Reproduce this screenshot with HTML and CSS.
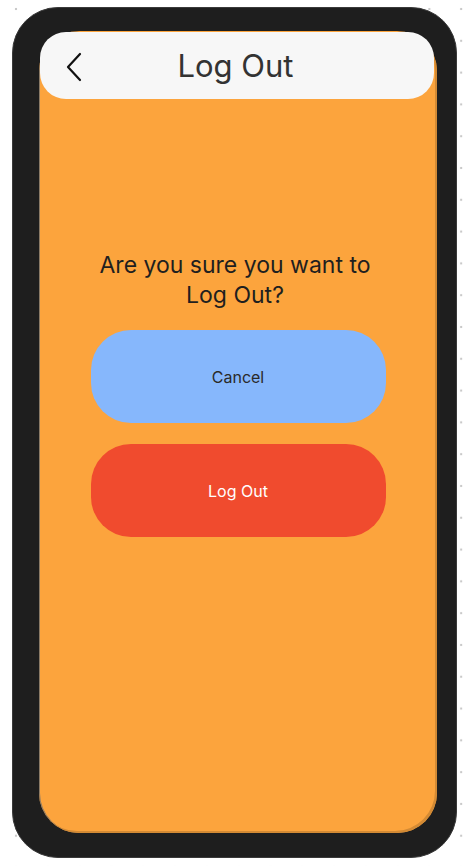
FILE: index.html
```html
<!DOCTYPE html>
<html lang="en">
<head>
<meta charset="utf-8">
<title>Log Out</title>
<link rel="stylesheet" href="styles.css">
</head>
<body>
  <div class="phone">
    <div class="screen">
      <header class="topbar">
        <button class="back" aria-label="Back">
          <svg width="18" height="30" viewBox="0 0 18 30" fill="none">
            <path d="M15 2 L3 15 L15 28" stroke="#111" stroke-width="2.2" stroke-linecap="round" stroke-linejoin="round"/>
          </svg>
        </button>
        <h1 class="title">Log Out</h1>
      </header>
      <main class="content">
        <p class="question">Are you sure you want to<br>Log Out?</p>
        <button class="btn btn-cancel">Cancel</button>
        <button class="btn btn-logout">Log Out</button>
      </main>
    </div>
  </div>
</body>
</html>
```

FILE: styles.css
```css
* { box-sizing: border-box; }

html, body {
  margin: 0;
  padding: 0;
}

body {
  width: 470px;
  height: 866px;
  overflow: hidden;
  background-color: #ffffff;
  background-image: radial-gradient(circle, #c9c9c9 1px, transparent 1.6px);
  background-size: 31.8px 31.8px;
  background-position: 0.1px -6.9px;
  font-family: Inter, "Noto Sans", sans-serif;
}

.phone {
  margin: 7px 0 0 12px;
  width: 445px;
  height: 851px;
  border-radius: 46px;
  background: #1e1e1e;
  border: 1px solid #3a3a3a;
  padding: 23px 19px 23px 26px;
}

.screen {
  position: relative;
  width: 398px;
  height: 802px;
  border-radius: 40px;
  background: #fca43d;
  box-shadow: inset -2px -2px 0 #d38a34, inset 1px 0 0 #8a7a66;
  display: flex;
  flex-direction: column;
}

.topbar {
  margin: 1px 0 0 1px;
  width: 394px;
  height: 67px;
  border-radius: 26px;
  background: #f7f7f7;
  display: flex;
  align-items: center;
  justify-content: center;
  position: relative;
}

.back {
  position: absolute;
  left: 25px;
  top: 20px;
  border: 0;
  padding: 0;
  background: none;
  width: 18px;
  height: 30px;
  display: block;
}
.back svg { display: block; }

.title {
  margin: 0 0 0 -3px;
  font-size: 31px;
  font-weight: 400;
  color: #333333;
  letter-spacing: 0;
  line-height: 1;
}

.content {
  display: flex;
  flex-direction: column;
  align-items: center;
  padding-top: 151px;
}

.question {
  margin: 0 0 20px;
  padding-right: 6px;
  font-size: 23px;
  line-height: 30px;
  text-align: center;
  color: #1f1f1f;
  font-weight: 400;
}

.btn {
  width: 295px;
  height: 93px;
  border: 0;
  border-radius: 40px;
  font-family: Inter, "Noto Sans", sans-serif;
  font-size: 16px;
  font-weight: 400;
}

.btn-cancel {
  background: #86b7fc;
  color: #2a2a2a;
  margin-bottom: 21px;
}

.btn-logout {
  background: #f04b2e;
  color: #ffffff;
}
```
